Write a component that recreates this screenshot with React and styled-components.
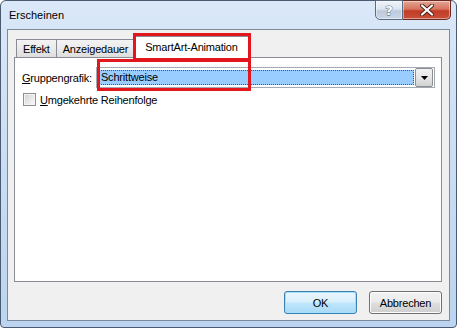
import React from "react";
import styled, { createGlobalStyle } from "styled-components";

const GlobalStyle = createGlobalStyle`
  html, body {
    margin: 0;
    padding: 0;
    background: #ffffff;
  }
  body {
    font-family: "Liberation Sans", Arial, sans-serif;
    font-size: 11px;
    color: #000;
  }
`;

// Fenster-Rahmen
const Window = styled.div`
  position: relative;
  box-sizing: border-box;
  width: 457px;
  height: 328px;
  border: 1px solid #4a5a70;
  border-radius: 6px 6px 4px 4px;
  background: linear-gradient(180deg, #dae8f8 0%, #cddff4 40%, #bcd4f0 100%);
  display: flex;
  flex-direction: column;
  padding: 0 6px 6px 6px;
`;

const TitleBar = styled.div`
  height: 28px;
  display: flex;
  align-items: flex-start;
`;

const TitleText = styled.span`
  font-size: 11px;
  margin: 8px 0 0 2px;
`;

const CaptionGroup = styled.div`
  margin-left: auto;
  margin-right: -1px;
  margin-top: -1px;
  display: flex;
`;

const CaptionButton = styled.div`
  box-sizing: border-box;
  width: ${(p) => p.$w}px;
  height: 20px;
  display: flex;
  align-items: center;
  justify-content: center;
  border: 1px solid ${(p) => (p.$close ? "#6b2a20" : "#5b6b80")};
  border-left-width: ${(p) => (p.$close ? 0 : 1)}px;
  border-radius: ${(p) => (p.$close ? "0 0 5px 0" : "0 0 0 5px")};
  background: ${(p) =>
    p.$close
      ? "linear-gradient(180deg, #e3a593 0%, #d67461 45%, #c23c26 55%, #c8503a 100%)"
      : "linear-gradient(180deg, #eef3f9 0%, #dce5f0 45%, #bdcadb 55%, #c9d6e6 100%)"};
  box-shadow: inset 0 0 0 1px rgba(255, 255, 255, 0.45);
  color: #fff;
  font-family: "DejaVu Sans", sans-serif;
  font-weight: bold;
  font-size: 13px;
  -webkit-text-stroke: 0.8px #4a5566;
  paint-order: stroke fill;
`;

const Client = styled.div`
  box-sizing: border-box;
  height: 292px;
  border: 1px solid #7d8a9a;
  background: #f0f0f0;
  display: flex;
  flex-direction: column;
  padding: 6px 7px 6px 6px;
`;

const TabRow = styled.div`
  display: flex;
  align-items: flex-end;
  height: 22px;
  padding-left: 2px;
  margin-bottom: -1px;
  position: relative;
  z-index: 1;
`;

const Tab = styled.div`
  box-sizing: border-box;
  height: ${(p) => (p.$active ? 22 : 18)}px;
  margin-bottom: ${(p) => (p.$active ? 0 : 1)}px;
  margin-left: ${(p) => (p.$active ? -2 : 0)}px;
  margin-right: ${(p) => (p.$active ? -2 : 0)}px;
  padding: ${(p) => (p.$active ? "4px 10px 0 11px" : "3px 6px 0 6px")};
  border: 1px solid #898c95;
  border-bottom: none;
  border-left-width: ${(p) => (p.$first || p.$active ? 1 : 0)}px;
  background: ${(p) =>
    p.$active ? "#ffffff" : "linear-gradient(180deg, #f3f3f3 0%, #ebebeb 50%, #dddddd 100%)"};
  letter-spacing: -0.2px;
  white-space: nowrap;
  position: relative;
  z-index: ${(p) => (p.$active ? 2 : 1)};
`;

const Panel = styled.div`
  box-sizing: border-box;
  height: 225px;
  border: 1px solid #898c95;
  background: #ffffff;
  padding: 9px 6px 0 7px;
  display: flex;
  flex-direction: column;
  gap: 5px;
`;

const FieldRow = styled.div`
  display: flex;
  align-items: center;
  gap: 4px;
  letter-spacing: -0.2px;
`;

const Combo = styled.div`
  flex: 1;
  box-sizing: border-box;
  height: 21px;
  border: 1px solid #a4a9b1;
  background: #ffffff;
  display: flex;
  align-items: center;
  padding: 1px 1px 1px 2px;
  gap: 1px;
`;

const ComboValue = styled.div`
  flex: 1;
  box-sizing: border-box;
  height: 15px;
  background: #99ccff;
  outline: 1px dotted #7a4a10;
  outline-offset: -1px;
  padding-left: 2px;
  line-height: 14px;
`;

const DropButton = styled.div`
  box-sizing: border-box;
  width: 18px;
  height: 19px;
  border: 1px solid #8e8f8f;
  border-radius: 2px;
  background: linear-gradient(180deg, #f2f2f2 0%, #e6e6e6 50%, #d2d2d2 100%);
  display: flex;
  align-items: center;
  justify-content: center;
`;

const CheckRow = styled.label`
  display: flex;
  align-items: center;
  gap: 4px;
  padding-left: 1px;
  letter-spacing: -0.2px;
`;

const CheckBox = styled.span`
  box-sizing: border-box;
  width: 13px;
  height: 13px;
  border: 1px solid #8f8f8f;
  background: linear-gradient(135deg, #d0d0d0 0%, #ebebeb 60%, #f8f8f8 100%);
  box-shadow: inset 0 0 0 1px #f4f4f4;
`;

const Underline = styled.span`
  text-decoration: underline;
`;

const ButtonRow = styled.div`
  display: flex;
  justify-content: flex-end;
  gap: 12px;
  margin-top: 9px;
`;

const DialogButton = styled.div`
  box-sizing: border-box;
  width: 73px;
  height: 23px;
  border-radius: 3px;
  border: 1px solid ${(p) => (p.$default ? "#3c7fb1" : "#707070")};
  background: ${(p) =>
    p.$default
      ? "linear-gradient(180deg, #eaf6fd 0%, #d9f0fc 45%, #bee6fd 55%, #a7d9f5 100%)"
      : "linear-gradient(180deg, #f2f2f2 0%, #ebebeb 45%, #dddddd 55%, #cfcfcf 100%)"};
  box-shadow: inset 0 0 0 1px ${(p) => (p.$default ? "#9ee0fd" : "#fcfcfc")};
  display: flex;
  align-items: center;
  justify-content: center;
  letter-spacing: -0.2px;
`;

// Rote Markierungen über dem Dialog
const Marker = styled.div`
  position: absolute;
  box-sizing: border-box;
  border: 3px solid #e4161d;
  pointer-events: none;
  z-index: 5;
`;

const TabMarker = styled(Marker)`
  left: 132px;
  top: 32px;
  width: 118px;
  height: 28px;
`;

const ComboMarker = styled(Marker)`
  left: 96px;
  top: 58px;
  width: 154px;
  height: 32px;
`;

const CloseGlyph = () => (
  <svg width="14" height="12" viewBox="0 0 14 12">
    <path d="M2 1.5 L12 10.5 M12 1.5 L2 10.5" stroke="#4d2018" strokeWidth="4" strokeLinecap="round" />
    <path d="M2 1.5 L12 10.5 M12 1.5 L2 10.5" stroke="#ffffff" strokeWidth="2.2" strokeLinecap="round" />
  </svg>
);

const ArrowDown = () => (
  <svg width="7" height="4" viewBox="0 0 7 4">
    <path d="M0 0 L7 0 L3.5 4 Z" fill="#000" />
  </svg>
);

export default function App() {
  return (
    <>
      <GlobalStyle />
      <Window>
        <TitleBar>
          <TitleText>Erscheinen</TitleText>
          <CaptionGroup>
            <CaptionButton $w={28}>?</CaptionButton>
            <CaptionButton $w={48} $close>
              <CloseGlyph />
            </CaptionButton>
          </CaptionGroup>
        </TitleBar>
        <Client>
          <TabRow>
            <Tab $first>Effekt</Tab>
            <Tab>Anzeigedauer</Tab>
            <Tab $active>SmartArt-Animation</Tab>
          </TabRow>
          <Panel>
            <FieldRow>
              <span>
                <Underline>G</Underline>ruppengrafik:
              </span>
              <Combo>
                <ComboValue>Schrittweise</ComboValue>
                <DropButton>
                  <ArrowDown />
                </DropButton>
              </Combo>
            </FieldRow>
            <CheckRow>
              <CheckBox />
              <span>
                <Underline>U</Underline>mgekehrte Reihenfolge
              </span>
            </CheckRow>
          </Panel>
          <ButtonRow>
            <DialogButton $default>OK</DialogButton>
            <DialogButton>Abbrechen</DialogButton>
          </ButtonRow>
        </Client>
        <TabMarker />
        <ComboMarker />
      </Window>
    </>
  );
}
